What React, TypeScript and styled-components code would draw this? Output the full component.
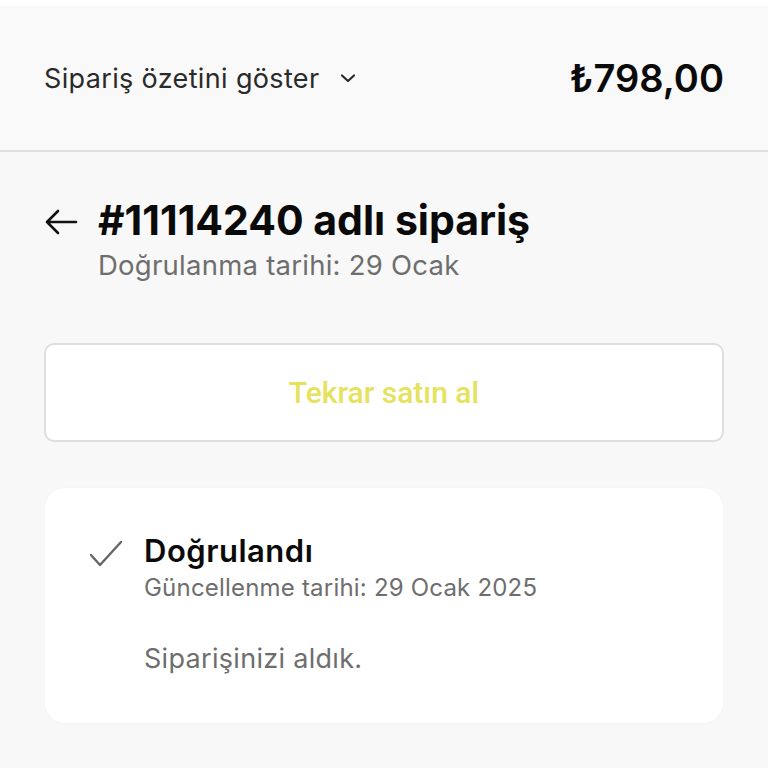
import React from "react";
import styled, { createGlobalStyle } from "styled-components";

const Global = createGlobalStyle`
  html, body { margin: 0; padding: 0; background: #f8f8f8; }
  body { font-family: Inter, "Noto Sans", sans-serif; -webkit-font-smoothing: antialiased; }
  * { box-sizing: border-box; }
`;

const Page = styled.div`
  min-height: 768px;
  background: #f8f8f8;
  border-top: 6px solid #ffffff;
  display: flex;
  flex-direction: column;
`;

const Header = styled.header`
  height: 146px;
  display: flex;
  align-items: center;
  justify-content: space-between;
  padding: 0 44px;
  border-bottom: 2px solid #e0e0e0;
  background: #f9f9f9;
`;

const Toggle = styled.button`
  display: flex;
  align-items: center;
  gap: 20px;
  background: none;
  border: none;
  padding: 0;
  font-family: inherit;
  font-size: 27px;
  color: #2a2a2a;
  letter-spacing: 0.35px;
`;

const Price = styled.div`
  font-size: 38px;
  font-weight: 600;
  color: #0a0a0a;
`;

const Main = styled.main`
  display: flex;
  flex-direction: column;
  padding: 44px 44px 0 44px;
`;

const TitleRow = styled.div`
  display: flex;
  align-items: flex-start;
  gap: 20px;
`;

const BackIcon = styled.svg`
  margin-top: 12px;
  flex-shrink: 0;
`;

const TitleBlock = styled.div`
  display: flex;
  flex-direction: column;
`;

const Title = styled.h1`
  margin: 0;
  font-size: 41px;
  font-weight: 700;
  color: #0a0a0a;
  line-height: 48px;
`;

const Subtitle = styled.div`
  margin-top: 3px;
  font-size: 27.5px;
  color: #6e6e6e;
  line-height: 36px;
  letter-spacing: 0.25px;
`;

const BuyAgain = styled.button`
  margin-top: 60px;
  height: 99px;
  width: 100%;
  background: #ffffff;
  border: 2px solid #dedede;
  border-radius: 10px;
  font-family: Roboto, "Noto Sans", sans-serif;
  font-size: 30px;
  font-weight: 500;
  color: #e6e25e;
`;

const StatusCard = styled.section`
  margin: 46px 1px 0 1px;
  background: #ffffff;
  border-radius: 20px;
  padding: 44px 44px 47px 44px;
  display: flex;
  gap: 21px;
  box-shadow: 0 0 3px rgba(0, 0, 0, 0.03);
`;

const CheckIcon = styled.svg`
  margin-top: 8px;
  flex-shrink: 0;
`;

const StatusBody = styled.div`
  display: flex;
  flex-direction: column;
`;

const StatusTitle = styled.div`
  font-size: 31px;
  font-weight: 600;
  color: #0a0a0a;
  line-height: 38px;
  letter-spacing: 0.5px;
`;

const StatusDate = styled.div`
  font-size: 24px;
  color: #6e6e6e;
  line-height: 36px;
  letter-spacing: 0.2px;
`;

const StatusNote = styled.div`
  margin-top: 36px;
  font-size: 27px;
  color: #6e6e6e;
  line-height: 34px;
  letter-spacing: 0.3px;
`;

export default function App() {
  return (
    <>
      <Global />
      <Page>
        <Header>
          <Toggle>
            Sipariş özetini göster
            <svg width="18" height="12" viewBox="0 0 18 12" fill="none">
              <path d="M3 3.5 L9 9 L15 3.5" stroke="#2a2a2a" strokeWidth="2.2" strokeLinecap="round" strokeLinejoin="round" />
            </svg>
          </Toggle>
          <Price>₺798,00</Price>
        </Header>
        <Main>
          <TitleRow>
            <BackIcon width="34" height="28" viewBox="0 0 34 28" fill="none">
              <path d="M32 14 H3 M14 3 L3 14 L14 25" stroke="#111" strokeWidth="2.6" strokeLinecap="round" strokeLinejoin="round" />
            </BackIcon>
            <TitleBlock>
              <Title>#11114240 adlı sipariş</Title>
              <Subtitle>Doğrulanma tarihi: 29 Ocak</Subtitle>
            </TitleBlock>
          </TitleRow>
          <BuyAgain>Tekrar satın al</BuyAgain>
          <StatusCard>
            <CheckIcon width="34" height="28" viewBox="0 0 34 28" fill="none">
              <path d="M2 15 L11 25 L32 2" stroke="#666" strokeWidth="2.4" strokeLinecap="round" strokeLinejoin="round" />
            </CheckIcon>
            <StatusBody>
              <StatusTitle>Doğrulandı</StatusTitle>
              <StatusDate>Güncellenme tarihi: 29 Ocak 2025</StatusDate>
              <StatusNote>Siparişinizi aldık.</StatusNote>
            </StatusBody>
          </StatusCard>
        </Main>
      </Page>
    </>
  );
}
